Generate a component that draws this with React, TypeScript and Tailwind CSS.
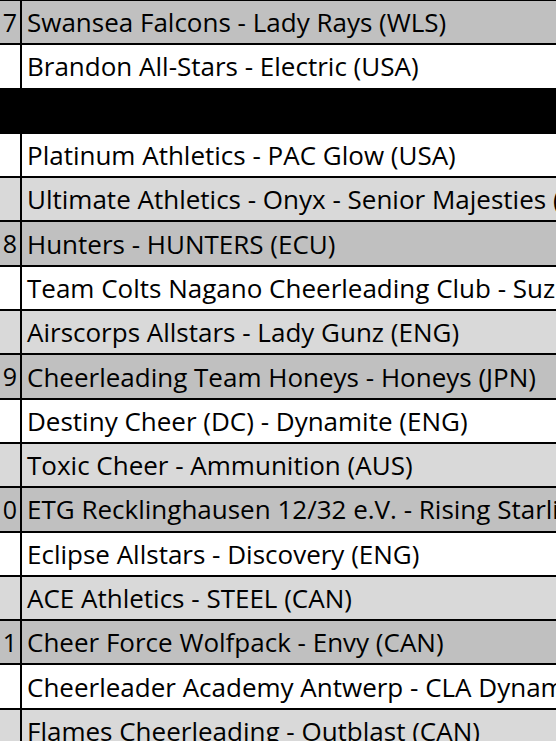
const rows: { num?: string; name: string; tone: 'dark' | 'white' | 'light' | 'black' }[] = [
  { num: '7', name: 'Swansea Falcons - Lady Rays (WLS)', tone: 'dark' },
  { name: 'Brandon All-Stars - Electric (USA)', tone: 'white' },
  { name: '', tone: 'black' },
  { name: 'Platinum Athletics - PAC Glow (USA)', tone: 'white' },
  { name: 'Ultimate Athletics - Onyx - Senior Majesties (USA)', tone: 'light' },
  { num: '8', name: 'Hunters - HUNTERS (ECU)', tone: 'dark' },
  { name: 'Team Colts Nagano Cheerleading Club - Suzaku (JPN)', tone: 'white' },
  { name: 'Airscorps Allstars - Lady Gunz (ENG)', tone: 'light' },
  { num: '9', name: 'Cheerleading Team Honeys - Honeys (JPN)', tone: 'dark' },
  { name: 'Destiny Cheer (DC) - Dynamite (ENG)', tone: 'white' },
  { name: 'Toxic Cheer - Ammunition (AUS)', tone: 'light' },
  { num: '0', name: 'ETG Recklinghausen 12/32 e.V. - Rising Starlights (GER)', tone: 'dark' },
  { name: 'Eclipse Allstars - Discovery (ENG)', tone: 'white' },
  { name: 'ACE Athletics - STEEL (CAN)', tone: 'light' },
  { num: '1', name: 'Cheer Force Wolfpack - Envy (CAN)', tone: 'dark' },
  { name: 'Cheerleader Academy Antwerp - CLA Dynamite (BEL)', tone: 'white' },
  { name: 'Flames Cheerleading - Outblast (CAN)', tone: 'light' },
];

const toneBg = {
  dark: 'bg-[#c0c0c0]',
  white: 'bg-white',
  light: 'bg-[#d9d9d9]',
  black: 'bg-black',
};

export default function App() {
  return (
    <div
      className="w-[556px] h-[741px] overflow-hidden bg-white text-black border-t border-black"
      style={{ fontFamily: '"Open Sans", Lato, sans-serif' }}
    >
      {rows.map((row, i) => (
        <div
          key={i}
          className={`flex h-[44.3px] border-b-2 border-black ${toneBg[row.tone]}`}
        >
          {row.tone === 'black' ? null : (
            <>
              {/* index column, mostly cut off */}
              <div className="w-[22px] shrink-0 border-r-2 border-black flex items-center justify-end pr-[3px] text-[25px] leading-none">
                {row.num}
              </div>
              <div className="flex-1 min-w-0 overflow-hidden flex items-center pl-[5px] whitespace-nowrap text-[26px] leading-none">
                {row.name}
              </div>
            </>
          )}
        </div>
      ))}
    </div>
  );
}
